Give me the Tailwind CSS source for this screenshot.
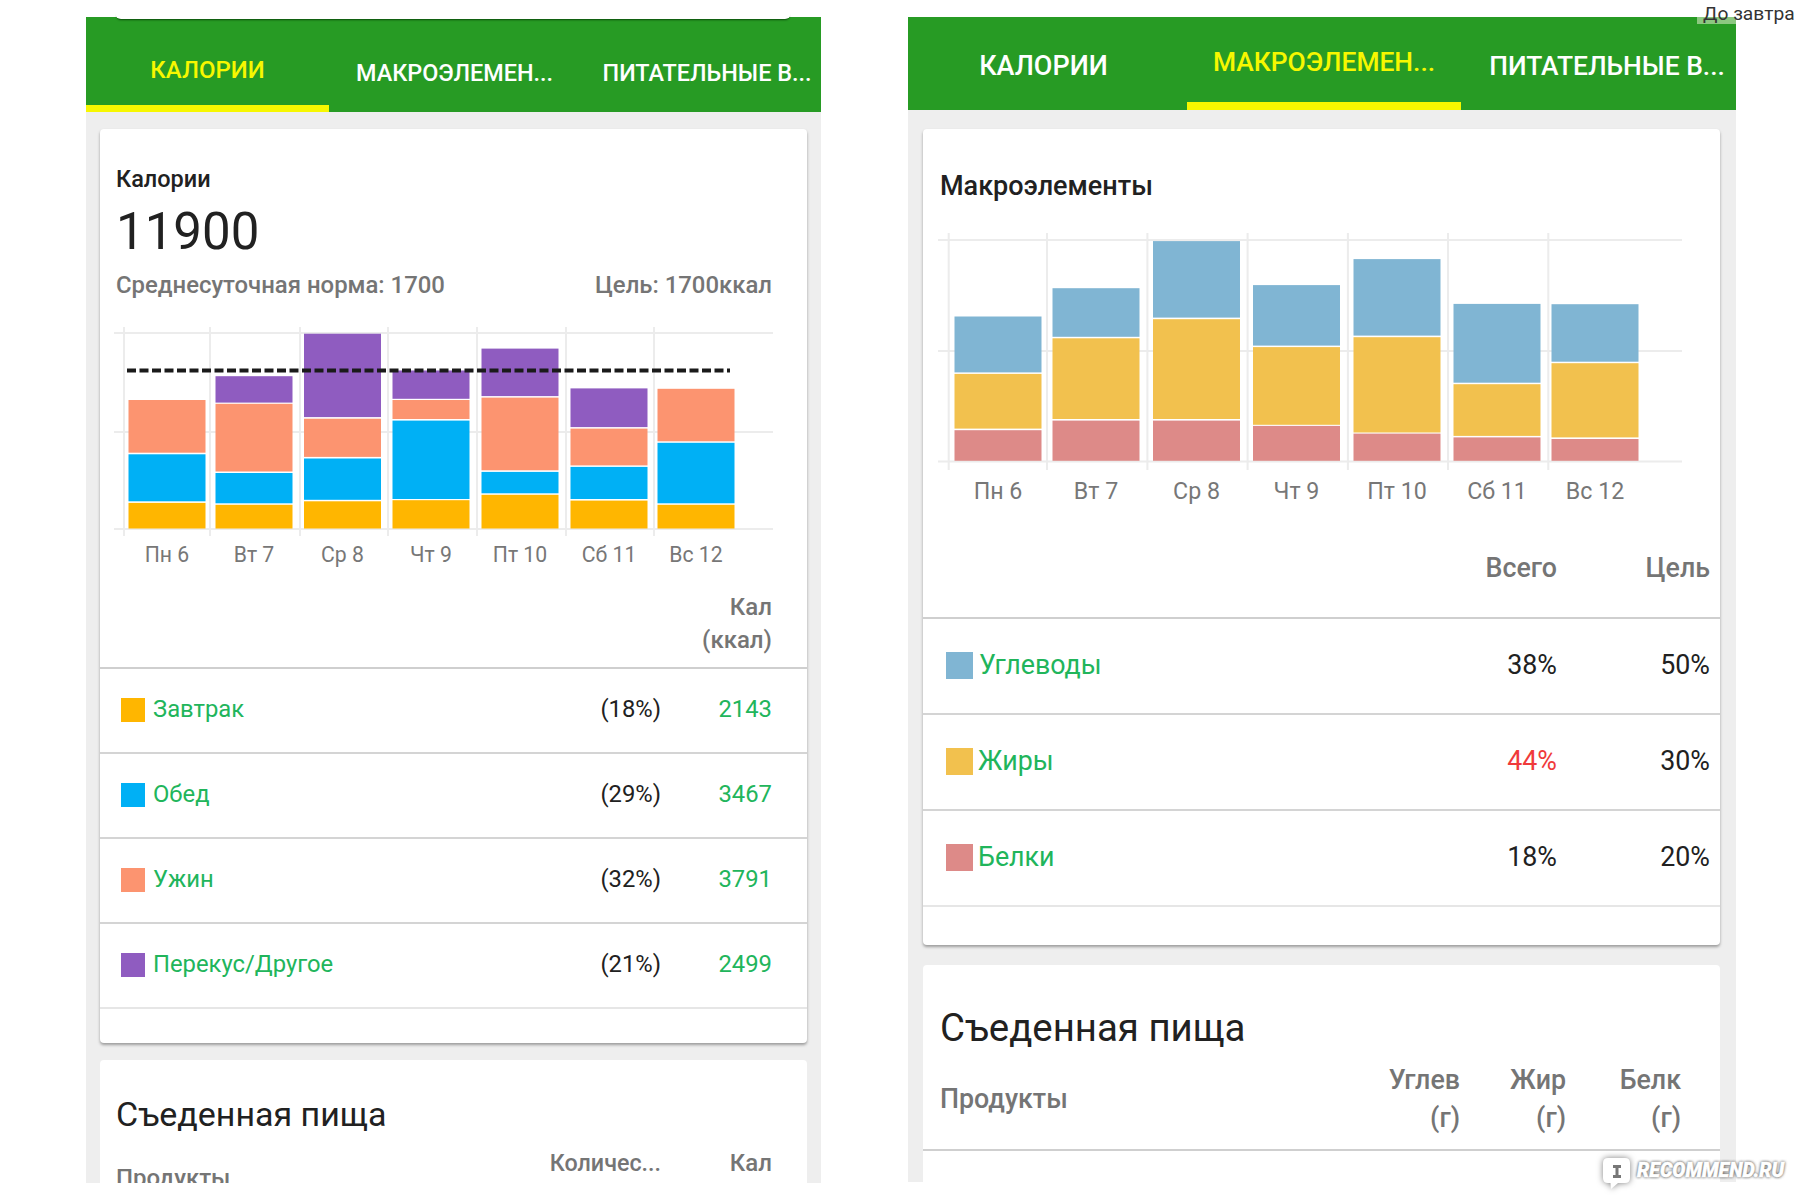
<!DOCTYPE html>
<html lang="ru">
<head>
  <meta charset="UTF-8">
  <meta name="viewport" content="width=device-width, initial-scale=1.0">
  <script src="https://cdn.jsdelivr.net/npm/@tailwindcss/browser@4"></script>
  <title>Калории и макроэлементы</title>
</head>
<body class="bg-white font-['Roboto',sans-serif] text-[#212121] h-[1200px] overflow-hidden relative">
  <div class="flex pl-[86px] pt-[17px] gap-[87px]">

    <!-- Экран: калории -->
    <section class="relative w-[735px] h-[1166px] bg-[#eeeeee] overflow-hidden">
      <div class="flex h-[95px] bg-[#279b24] text-white font-medium text-[23.4px] leading-[30px] whitespace-nowrap">
        <div class="w-[243px] shrink-0 pt-[18px] border-b-[7px] border-[#f7f700] text-[#f7f700] text-[24px] flex items-center justify-center">КАЛОРИИ</div>
        <div class="w-[251px] shrink-0 pt-[17px] flex items-center justify-center">МАКРОЭЛЕМЕН...</div>
        <div class="w-[254px] shrink-0 pt-[17px] flex items-center justify-center">ПИТАТЕЛЬНЫЕ В...</div>
      </div>

      <div class="mx-[14px] mt-[17px] bg-white rounded-[4px] shadow-[0_2px_3px_rgba(0,0,0,0.35)]">
        <div class="pl-[16px] pr-[35px] pt-[35px]">
          <h2 class="text-[23.5px] leading-[30px] font-medium">Калории</h2>
          <p class="mt-[8px] text-[51px] leading-[60px]">11900</p>
          <div class="mt-[8px] flex justify-between text-[23.9px] leading-[30px] font-medium text-[#757575]">
            <span>Среднесуточная норма: 1700</span>
            <span>Цель: 1700ккал</span>
          </div>
        </div>

        <svg class="block mt-[20px]" width="707" height="250" viewBox="100 320 707 250">
          <g stroke="#ececec" stroke-width="2">
            <path d="M114 333H773M114 432H773M114 529H773"/>
            <path d="M124 327V536M210 327V536M300 327V536M388 327V536M477 327V536M566 327V536M654 327V536"/>
          </g>
          <g fill="#ffb600">
            <rect x="128.5" y="502.9" width="77" height="25.6"/>
            <rect x="215.5" y="504.8" width="77" height="23.7"/>
            <rect x="304" y="501.3" width="77" height="27.2"/>
            <rect x="392.5" y="500.2" width="77" height="28.3"/>
            <rect x="481.5" y="494.8" width="77" height="33.7"/>
            <rect x="570.5" y="500.6" width="77" height="27.9"/>
            <rect x="657.5" y="504.8" width="77" height="23.7"/>
          </g>
          <g fill="#00b0f5">
            <rect x="128.5" y="454.3" width="77" height="47"/>
            <rect x="215.5" y="473" width="77" height="30.3"/>
            <rect x="304" y="458.5" width="77" height="41.3"/>
            <rect x="392.5" y="420.6" width="77" height="78.4"/>
            <rect x="481.5" y="471.9" width="77" height="21.4"/>
            <rect x="570.5" y="466.9" width="77" height="32.1"/>
            <rect x="657.5" y="442.8" width="77" height="60.5"/>
          </g>
          <g fill="#fc9470">
            <rect x="128.5" y="400" width="77" height="52.7"/>
            <rect x="215.5" y="403.8" width="77" height="67.7"/>
            <rect x="304" y="418.7" width="77" height="38.2"/>
            <rect x="392.5" y="400" width="77" height="19"/>
            <rect x="481.5" y="397.6" width="77" height="72.7"/>
            <rect x="570.5" y="428.6" width="77" height="36.8"/>
            <rect x="657.5" y="388.8" width="77" height="52.5"/>
          </g>
          <g fill="#8f5cc0">
            <rect x="215.5" y="376.2" width="77" height="26.4"/>
            <rect x="304" y="333.7" width="77" height="83.4"/>
            <rect x="392.5" y="370.5" width="77" height="28.3"/>
            <rect x="481.5" y="348.6" width="77" height="47.5"/>
            <rect x="570.5" y="388.4" width="77" height="38.7"/>
          </g>
          <path d="M127 370.500H730" stroke="#1a1a1a" stroke-width="4" stroke-dasharray="9 3.500"/>
          <g class="fill-[#777777] text-[21.2px]" text-anchor="middle">
            <text x="167" y="562">Пн 6</text>
            <text x="254" y="562">Вт 7</text>
            <text x="342.5" y="562">Ср 8</text>
            <text x="431" y="562">Чт 9</text>
            <text x="520" y="562">Пт 10</text>
            <text x="609" y="562">Сб 11</text>
            <text x="696" y="562">Вс 12</text>
          </g>
        </svg>

        <div class="pt-[21px] pb-[10px] pr-[35px] border-b-2 border-[#cfcfcf] text-right text-[24px] leading-[33px] font-medium text-[#757575]">
          <div>Кал</div>
          <div>(ккал)</div>
        </div>
        <div class="h-[85px] flex items-center pl-[21px] pr-[35px] pb-[1px] border-b-2 border-[#d4d4d4] text-[23.800px]">
          <span class="w-[24px] h-[24px] bg-[#ffb600]"></span>
          <span class="ml-[8px] flex-1 text-[#21b55b]">Завтрак</span>
          <span>(18%)</span>
          <span class="w-[111px] text-right text-[#21b55b]">2143</span>
        </div>
        <div class="h-[85px] flex items-center pl-[21px] pr-[35px] pb-[1px] border-b-2 border-[#d4d4d4] text-[23.800px]">
          <span class="w-[24px] h-[24px] bg-[#00b0f5]"></span>
          <span class="ml-[8px] flex-1 text-[#21b55b]">Обед</span>
          <span>(29%)</span>
          <span class="w-[111px] text-right text-[#21b55b]">3467</span>
        </div>
        <div class="h-[85px] flex items-center pl-[21px] pr-[35px] pb-[1px] border-b-2 border-[#d4d4d4] text-[23.800px]">
          <span class="w-[24px] h-[24px] bg-[#fc9470]"></span>
          <span class="ml-[8px] flex-1 text-[#21b55b]">Ужин</span>
          <span>(32%)</span>
          <span class="w-[111px] text-right text-[#21b55b]">3791</span>
        </div>
        <div class="h-[85px] flex items-center pl-[21px] pr-[35px] pb-[1px] border-b-2 border-[#e6e6e6] text-[23.800px]">
          <span class="w-[24px] h-[24px] bg-[#8f5cc0]"></span>
          <span class="ml-[8px] flex-1 text-[#21b55b]">Перекус/Другое</span>
          <span>(21%)</span>
          <span class="w-[111px] text-right text-[#21b55b]">2499</span>
        </div>
        <div class="h-[34px]"></div>
      </div>

      <div class="mx-[14px] mt-[17px] h-[200px] bg-white rounded-[4px] pl-[16px] pr-[35px] pt-[34px]">
        <h2 class="text-[34px] leading-[40px]">Съеденная пища</h2>
        <div class="mt-[13px] flex text-[24px] leading-[33px] font-medium text-[#757575] whitespace-nowrap">
          <span class="flex-1 pt-[15px]">Продукты</span>
          <span class="text-[23.3px]">Количес...</span>
          <span class="w-[111px] text-right">Кал</span>
        </div>
      </div>
    </section>

    <!-- Экран: макроэлементы -->
    <section class="relative w-[828px] h-[1165px] bg-[#eeeeee] overflow-hidden">
      <div class="flex h-[93px] bg-[#279b24] text-white font-medium text-[26.400px] leading-[32px] whitespace-nowrap">
        <div class="w-[271px] mr-[8px] pt-[5px] text-[27px] flex items-center justify-center">КАЛОРИИ</div>
        <div class="w-[274px] pt-[5px] border-b-8 border-[#f7f700] text-[#f7f700] flex items-center justify-center">МАКРОЭЛЕМЕН...</div>
        <div class="flex-1 pl-[17px] pt-[5px] flex items-center justify-center">ПИТАТЕЛЬНЫЕ В...</div>
      </div>

      <div class="ml-[15px] mr-[16px] mt-[19px] bg-white rounded-[4px] shadow-[0_2px_3px_rgba(0,0,0,0.35)]">
        <h2 class="pl-[17px] pt-[40px] text-[27px] leading-[34px] font-medium">Макроэлементы</h2>

        <svg class="block mt-[14px]" width="797" height="289" viewBox="923 217 797 289">
          <g stroke="#ececec" stroke-width="2">
            <path d="M938 240H1682M938 351H1682M938 461.5H1682"/>
            <path d="M948.7 233V470M1047 233V470M1147.4 233V470M1247.6 233V470M1347.9 233V470M1448 233V470M1548.3 233V470"/>
          </g>
          <g fill="#dd8a88">
            <rect x="954.5" y="430.2" width="87" height="30.6"/>
            <rect x="1052.5" y="420.6" width="87" height="40.2"/>
            <rect x="1153" y="420.6" width="87" height="40.2"/>
            <rect x="1253" y="425.9" width="87" height="34.9"/>
            <rect x="1353.5" y="433.6" width="87" height="27.2"/>
            <rect x="1453.5" y="437.4" width="87" height="23.4"/>
            <rect x="1551.5" y="439" width="87" height="21.8"/>
          </g>
          <g fill="#f2c14e">
            <rect x="954.5" y="373.9" width="87" height="54.7"/>
            <rect x="1052.5" y="338.3" width="87" height="80.7"/>
            <rect x="1153" y="319.2" width="87" height="99.8"/>
            <rect x="1253" y="347.1" width="87" height="77.7"/>
            <rect x="1353.5" y="337.2" width="87" height="95.3"/>
            <rect x="1453.5" y="384.2" width="87" height="51.7"/>
            <rect x="1551.5" y="363.2" width="87" height="74.2"/>
          </g>
          <g fill="#80b5d3">
            <rect x="954.5" y="316.5" width="87" height="55.9"/>
            <rect x="1052.5" y="288.2" width="87" height="48.6"/>
            <rect x="1153" y="241.1" width="87" height="76.5"/>
            <rect x="1253" y="285.1" width="87" height="60.5"/>
            <rect x="1353.5" y="259.1" width="87" height="76.5"/>
            <rect x="1453.5" y="303.9" width="87" height="78.8"/>
            <rect x="1551.5" y="304.2" width="87" height="57.5"/>
          </g>
          <g class="fill-[#777777] text-[23.2px]" text-anchor="middle">
            <text x="998" y="499">Пн 6</text>
            <text x="1096" y="499">Вт 7</text>
            <text x="1196.5" y="499">Ср 8</text>
            <text x="1296.5" y="499">Чт 9</text>
            <text x="1397" y="499">Пт 10</text>
            <text x="1497" y="499">Сб 11</text>
            <text x="1595" y="499">Вс 12</text>
          </g>
        </svg>

        <div class="h-[113px] flex pt-[45px] pr-[10px] border-b-2 border-[#cfcfcf] text-[26.800px] leading-[34px] font-medium text-[#757575]">
          <span class="ml-auto">Всего</span>
          <span class="w-[153px] text-right">Цель</span>
        </div>
        <div class="h-[96px] flex items-center pl-[23px] pr-[10px] pb-[1px] border-b-2 border-[#d4d4d4] text-[26.800px]">
          <span class="w-[27px] h-[27px] bg-[#80b5d3]"></span>
          <span class="ml-[6px] flex-1 text-[#21b55b]">Углеводы</span>
          <span>38%</span>
          <span class="w-[153px] text-right">50%</span>
        </div>
        <div class="h-[96px] flex items-center pl-[23px] pr-[10px] pb-[1px] border-b-2 border-[#d4d4d4] text-[26.800px]">
          <span class="w-[27px] h-[27px] bg-[#f2c14e]"></span>
          <span class="ml-[5px] flex-1 text-[#21b55b]">Жиры</span>
          <span class="text-[#f03a3a]">44%</span>
          <span class="w-[153px] text-right">30%</span>
        </div>
        <div class="h-[96px] flex items-center pl-[23px] pr-[10px] pb-[1px] border-b-2 border-[#e6e6e6] text-[26.800px]">
          <span class="w-[27px] h-[27px] bg-[#dd8a88]"></span>
          <span class="ml-[5px] flex-1 text-[#21b55b]">Белки</span>
          <span>18%</span>
          <span class="w-[153px] text-right">20%</span>
        </div>
        <div class="h-[38px]"></div>
      </div>

      <div class="ml-[15px] mr-[16px] mt-[20px] h-[300px] bg-white rounded-[4px]">
        <h2 class="pl-[17px] pt-[41px] text-[38.400px] leading-[44px]">Съеденная пища</h2>
        <div class="h-[101px] flex pl-[17px] pr-[39px] pt-[11px] border-b-2 border-[#cfcfcf] text-[26.800px] leading-[38px] font-medium text-[#757575]">
          <span class="flex-1 pt-[19px]">Продукты</span>
          <span class="w-[100px] text-right">Углев<br>(г)</span>
          <span class="w-[106px] text-right">Жир<br>(г)</span>
          <span class="w-[115px] text-right">Белк<br>(г)</span>
        </div>
      </div>
    </section>
  </div>

  <!-- Обрезок карточки над зелёной шапкой -->
  <div class="absolute left-[115px] top-0 w-[676px] h-[19px] bg-white rounded-b-[6px] shadow-[0_3px_2px_-2px_rgba(0,50,0,0.75)]"></div>

  <!-- Надпись поверх скриншота -->
  <div class="absolute left-[1697px] top-[17px] w-[39px] h-[7px] bg-[#8cc880]"></div>
  <div class="absolute left-[1703px] top-[2px] text-[19.2px] leading-[24px] text-[#333333] whitespace-nowrap">До завтра</div>

  <!-- Водяной знак -->
  <div class="absolute left-[1603px] top-[1158px] flex items-center">
    <svg width="28" height="31" viewBox="0 0 28 31" class="drop-shadow-[0_0_3px_rgba(0,0,0,0.5)]">
      <path d="M5 0H22Q27 0 27 5V20Q27 25 22 25H15L8 31L7.500 25H5Q0 25 0 20V5Q0 0 5 0Z" fill="#ffffff"/>
      <path d="M10 7H18V10H15.500V17H18V20H10V17H12.500V10H10Z" fill="#777777"/>
    </svg>
    <span class="ml-[6px] -mt-[6px] italic font-black text-[19.500px] leading-[24px] text-white [-webkit-text-stroke:0.5px_white] [text-shadow:0_0_3px_#555555,0_0_3px_#777777]">RECOMMEND.RU</span>
  </div>
</body>
</html>
